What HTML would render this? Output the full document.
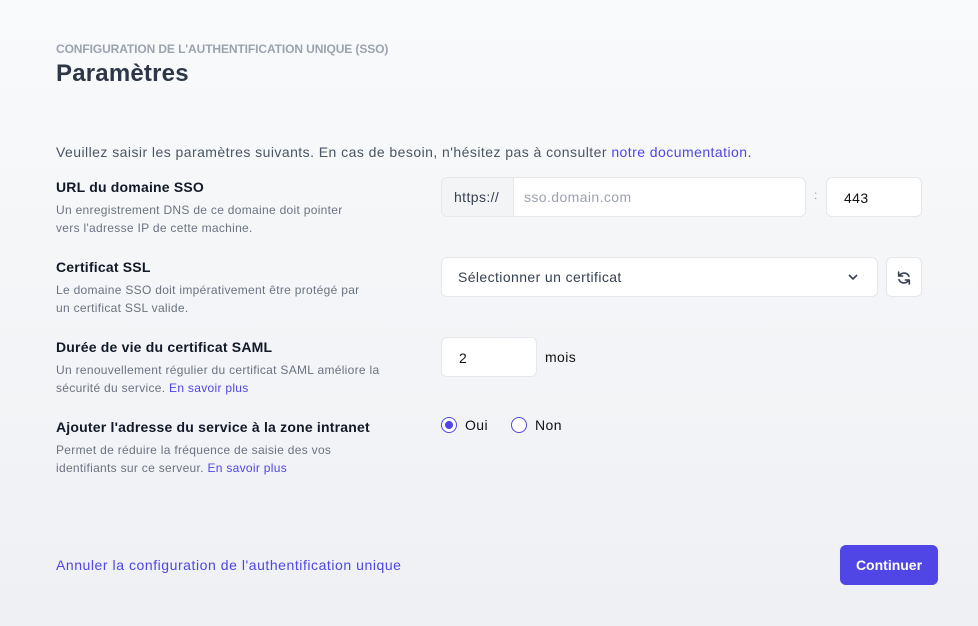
<!DOCTYPE html>
<html><head><meta charset="utf-8"><style>
*{box-sizing:border-box;margin:0;padding:0}
body{width:978px;height:626px;overflow:hidden;font-family:"Liberation Sans",sans-serif;background:linear-gradient(#f9fafb,#eef0f4);position:relative;color:#1f2937}
.a{position:absolute;white-space:nowrap}
.lbl{font-size:14px;font-weight:bold;color:#111827;letter-spacing:0.2px}
.desc{font-size:12px;color:#6b7280;line-height:18px;letter-spacing:0.3px}
.lnk{color:#4f46e5}
.box{position:absolute;background:#fff;border:1px solid #e5e7eb;border-radius:6px;font-size:14px;letter-spacing:0.4px}
</style></head><body>
<div class="a" style="left:56px;top:42px;font-size:12px;font-weight:bold;color:#9ca3af;letter-spacing:-0.1px">CONFIGURATION DE L'AUTHENTIFICATION UNIQUE (SSO)</div>
<div class="a" style="left:56px;top:60px;font-size:24px;font-weight:bold;color:#2d3748;letter-spacing:0.2px">Paramètres</div>
<div class="a" style="left:56px;top:144px;font-size:14px;color:#4b5563;letter-spacing:0.45px">Veuillez saisir les paramètres suivants. En cas de besoin, n'hésitez pas à consulter <span class="lnk">notre documentation</span>.</div>

<div class="a lbl" style="left:56px;top:179px">URL du domaine SSO</div>
<div class="a desc" style="left:56px;top:201px">Un enregistrement DNS de ce domaine doit pointer<br>vers l'adresse IP de cette machine.</div>
<div class="box" style="left:441px;top:177px;width:365px;height:40px;overflow:hidden">
<div style="position:absolute;left:0;top:0;width:72px;height:40px;background:#f3f4f6;border-right:1px solid #e5e7eb;color:#374151;padding:11px 0 0 12px">https://</div>
<div style="position:absolute;left:82px;top:11px;color:#9ca3af">sso.domain.com</div></div>
<div class="a" style="left:814px;top:188px;color:#9ca3af;font-size:12px">:</div>
<div class="box" style="left:826px;top:177px;width:96px;height:40px;padding:12px 0 0 17px;color:#111">443</div>

<div class="a lbl" style="left:56px;top:259px">Certificat SSL</div>
<div class="a desc" style="left:56px;top:281px">Le domaine SSO doit impérativement être protégé par<br>un certificat SSL valide.</div>
<div class="box" style="left:441px;top:257px;width:437px;height:40px;padding:11px 0 0 16px;color:#374151">Sélectionner un certificat
<svg style="position:absolute;right:18px;top:14px" width="12" height="10" viewBox="0 0 12 10"><path d="M2 3l4 4 4-4" fill="none" stroke="#374151" stroke-width="1.6"/></svg></div>
<div class="box" style="left:886px;top:257px;width:36px;height:40px">
<svg style="position:absolute;left:9px;top:12px" width="16" height="16" viewBox="0 0 24 24" fill="none" stroke="#374151" stroke-width="2.4" stroke-linecap="round" stroke-linejoin="round"><path d="M4 3v6h6M20 21v-6h-6M5 9A8 8 0 0 1 19.5 9.5M19 15A8 8 0 0 1 4.5 14.5"/></svg></div>

<div class="a lbl" style="left:56px;top:339px">Durée de vie du certificat SAML</div>
<div class="a desc" style="left:56px;top:361px">Un renouvellement régulier du certificat SAML améliore la<br>sécurité du service. <span class="lnk">En savoir plus</span></div>
<div class="box" style="left:441px;top:337px;width:96px;height:40px;padding:12px 0 0 17px;color:#111">2</div>
<div class="a" style="left:545px;top:349px;font-size:14px;color:#111;letter-spacing:0.4px">mois</div>

<div class="a lbl" style="left:56px;top:419px">Ajouter l'adresse du service à la zone intranet</div>
<div class="a desc" style="left:56px;top:441px">Permet de réduire la fréquence de saisie des vos<br>identifiants sur ce serveur. <span class="lnk">En savoir plus</span></div>
<div class="a" style="left:441px;top:417px;width:16px;height:16px;border:1.5px solid #4f46e5;border-radius:50%;background:#fff"><div style="margin:2.5px;width:8px;height:8px;border-radius:50%;background:#4f46e5"></div></div>
<div class="a" style="left:465px;top:417px;font-size:14px;color:#111;letter-spacing:0.4px">Oui</div>
<div class="a" style="left:511px;top:417px;width:16px;height:16px;border:1.5px solid #4f46e5;border-radius:50%;background:#fff"></div>
<div class="a" style="left:535px;top:417px;font-size:14px;color:#111;letter-spacing:0.4px">Non</div>

<div class="a lnk" style="left:56px;top:557px;font-size:14px;letter-spacing:0.55px">Annuler la configuration de l'authentification unique</div>
<div class="a" style="left:840px;top:545px;width:98px;height:40px;background:#4f46e5;border-radius:6px;color:#fff;font-size:14px;font-weight:bold;text-align:center;line-height:40px">Continuer</div>
</body></html>
